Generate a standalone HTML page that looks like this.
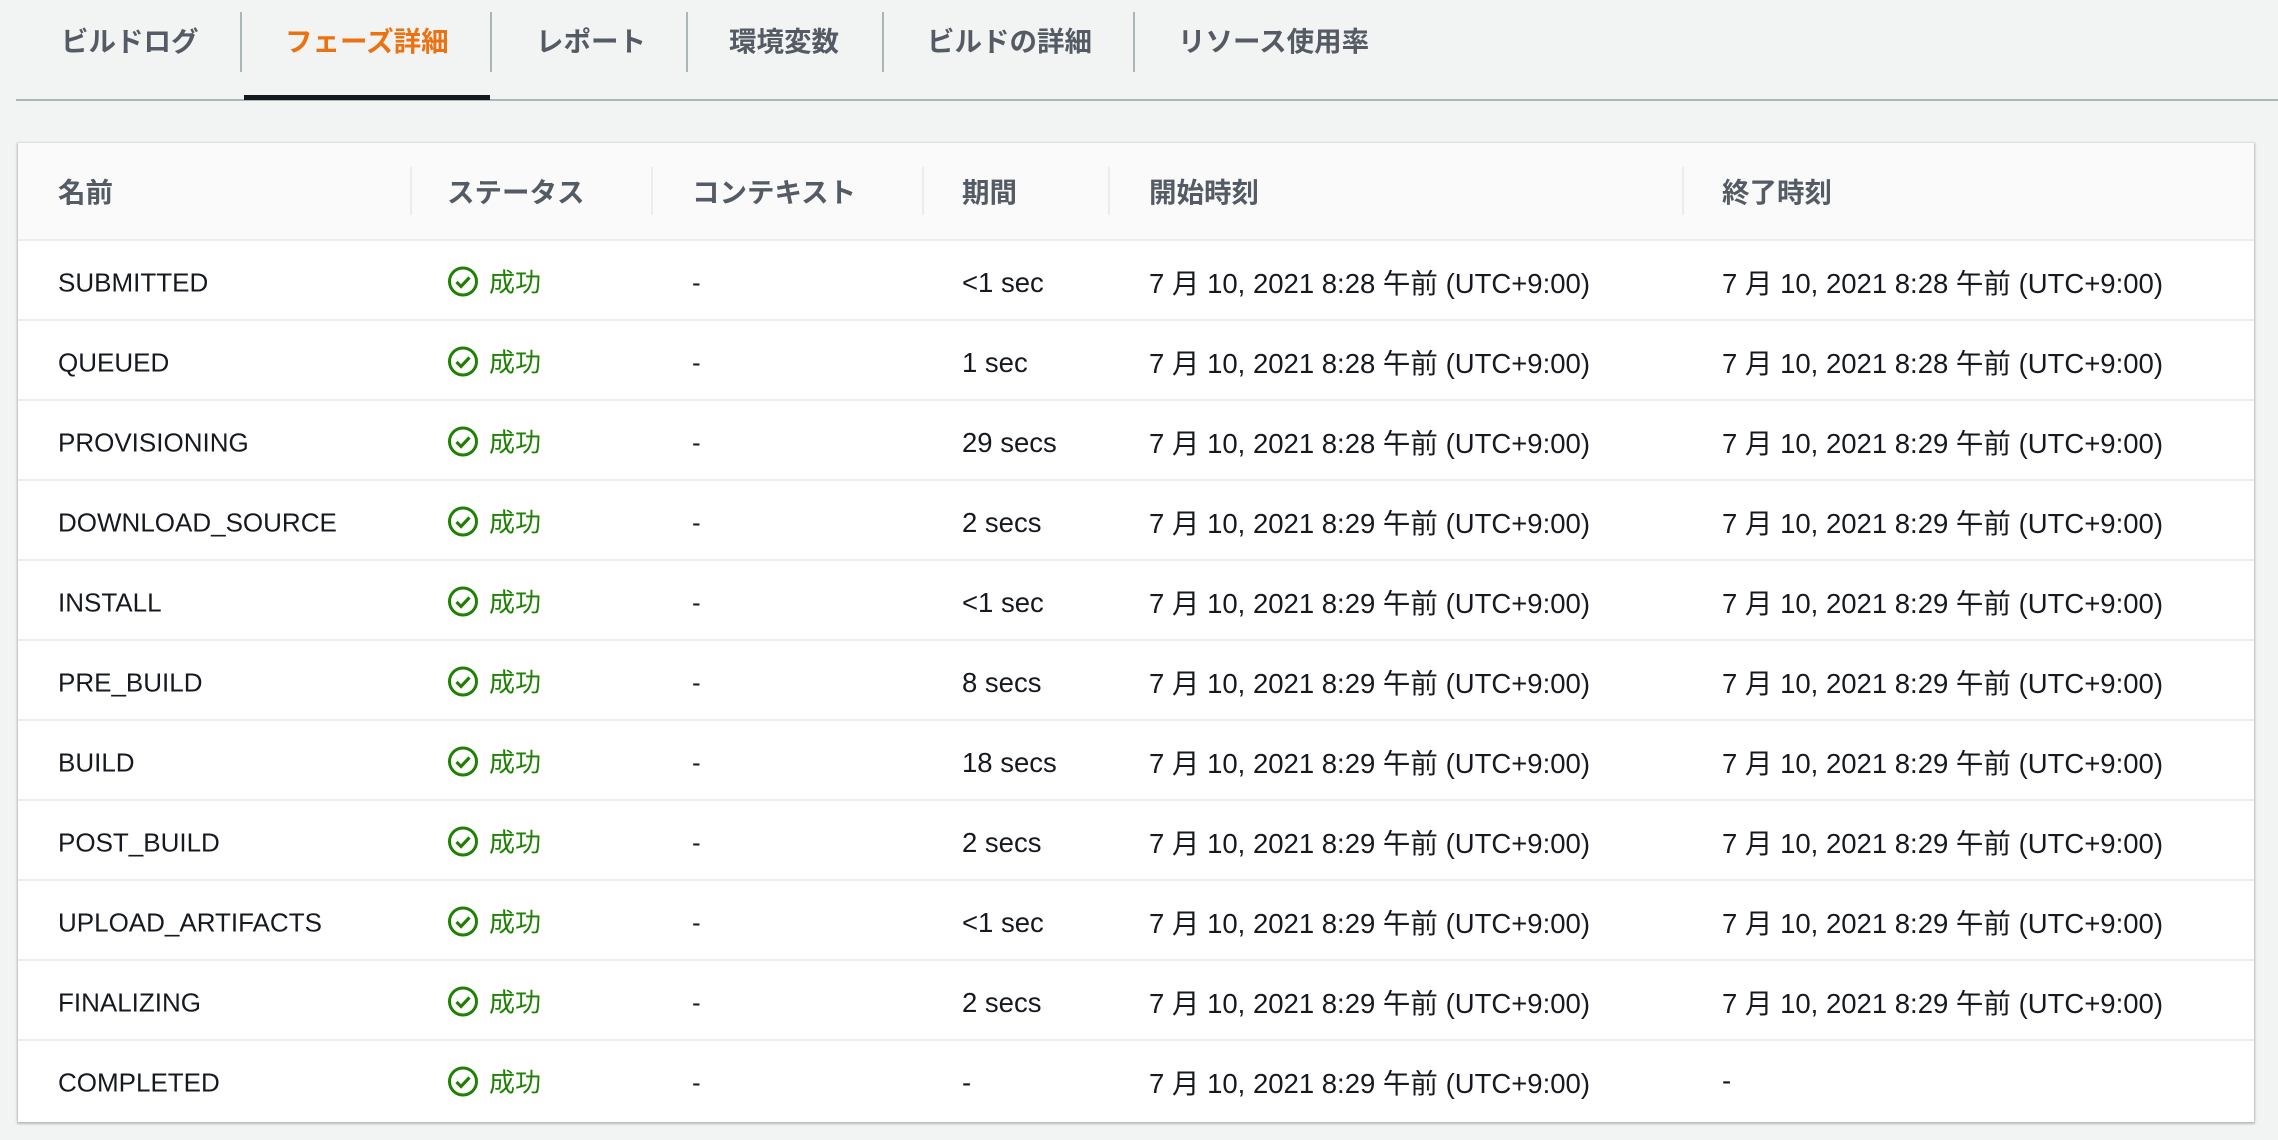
<!DOCTYPE html>
<html><head><meta charset="utf-8"><style>
body{margin:0;width:2278px;height:1140px;background:#f2f3f3;font-family:"Liberation Sans","Noto Sans CJK JP",sans-serif;position:relative;overflow:hidden;color:#16191f}
.tab{position:absolute;top:22px;font-size:27.5px;font-weight:bold;color:#545b64;line-height:40px}
.sep{position:absolute;top:12px;height:60px;width:2px;background:#aab7b8}
.line{position:absolute;left:16px;right:0;top:99px;height:2px;background:#aab7b8}
.ul{position:absolute;left:244px;width:246px;top:95px;height:5px;background:#16191f}
.tbl{position:absolute;left:18px;top:143px;width:2236px;height:979px;background:#fff;box-shadow:0 1px 2px 1px rgba(0,28,36,.25)}
.hd{position:absolute;left:0;top:0;width:100%;height:96px;background:#fafafa;border-bottom:2px solid #eaeded}
.h{position:absolute;top:47px;transform:translateY(-50%);font-size:27.5px;font-weight:bold;color:#545b64}
.hs{position:absolute;top:24px;height:48px;width:2px;background:#eaeded}
.row{position:absolute;left:0;width:100%;height:80px;border-bottom:2px solid #eaeded;box-sizing:border-box}
.c{position:absolute;top:42px;transform:translateY(-50%);font-size:26px;white-space:nowrap}
.dt{font-size:27.5px;top:40px}
.ok{color:#1d8102;display:flex;align-items:center;gap:10px;top:40px}
</style></head><body>
<div class="tab" style="left:61px">ビルドログ</div>
<div class="sep" style="left:240px"></div>
<div class="tab" style="left:285px;color:#ec7211">フェーズ詳細</div>
<div class="sep" style="left:490px"></div>
<div class="tab" style="left:536px">レポート</div>
<div class="sep" style="left:686px"></div>
<div class="tab" style="left:729px">環境変数</div>
<div class="sep" style="left:882px"></div>
<div class="tab" style="left:927px">ビルドの詳細</div>
<div class="sep" style="left:1133px"></div>
<div class="tab" style="left:1178px">リソース使用率</div>
<div class="line"></div><div class="ul"></div>
<div class="tbl">
<div class="hd">
<div class="h" style="left:40px">名前</div>
<div class="hs" style="left:392px"></div>
<div class="h" style="left:429px">ステータス</div>
<div class="hs" style="left:633px"></div>
<div class="h" style="left:674px">コンテキスト</div>
<div class="hs" style="left:904px"></div>
<div class="h" style="left:944px">期間</div>
<div class="hs" style="left:1090px"></div>
<div class="h" style="left:1131px">開始時刻</div>
<div class="hs" style="left:1664px"></div>
<div class="h" style="left:1704px">終了時刻</div>
</div>
<div id="rows"></div>
</div>
<script>
var d=[["SUBMITTED","<1 sec","8:28","8:28"],["QUEUED","1 sec","8:28","8:28"],["PROVISIONING","29 secs","8:28","8:29"],["DOWNLOAD_SOURCE","2 secs","8:29","8:29"],["INSTALL","<1 sec","8:29","8:29"],["PRE_BUILD","8 secs","8:29","8:29"],["BUILD","18 secs","8:29","8:29"],["POST_BUILD","2 secs","8:29","8:29"],["UPLOAD_ARTIFACTS","<1 sec","8:29","8:29"],["FINALIZING","2 secs","8:29","8:29"],["COMPLETED","-","8:29",null]];
var h="";function e(s){return s.replace(/</g,"&lt;")}
d.forEach(function(r,i){h+='<div class="row" style="top:'+(98+i*80)+'px;'+(i==10?'border:0':'')+'">'+
'<div class="c" style="left:40px">'+r[0]+'</div>'+
'<div class="c ok" style="left:429px"><svg width="32" height="32" viewBox="0 0 32 32"><circle cx="16" cy="16" r="13.5" fill="none" stroke="#1d8102" stroke-width="3"/><path d="M9.5 16.5l4.5 4.5 8.5-9" fill="none" stroke="#1d8102" stroke-width="3.2"/></svg>成功</div>'+
'<div class="c" style="left:674px">-</div>'+
'<div class="c dt" style="left:944px;top:42px">'+e(r[1])+'</div>'+
'<div class="c dt" style="left:1131px">7 月 10, 2021 '+r[2]+' 午前 (UTC+9:00)</div>'+
'<div class="c dt" style="left:1704px">'+(r[3]?'7 月 10, 2021 '+r[3]+' 午前 (UTC+9:00)':'-')+'</div></div>'});
document.getElementById("rows").innerHTML=h;
</script>
</body></html>
